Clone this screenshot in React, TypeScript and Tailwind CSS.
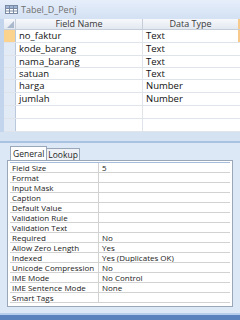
import React from 'react';

const fields = [
  { name: 'no_faktur', type: 'Text' },
  { name: 'kode_barang', type: 'Text' },
  { name: 'nama_barang', type: 'Text' },
  { name: 'satuan', type: 'Text' },
  { name: 'harga', type: 'Number' },
  { name: 'jumlah', type: 'Number' },
  { name: '', type: '' },
  { name: '', type: '' },
];

const rowHeights = ['h-[13px]', 'h-[13px]', 'h-[12px]', 'h-[12px]', 'h-[13px]', 'h-[13px]', 'h-[13px]', 'h-[13px]'];

const props = [
  ['Field Size', '5'],
  ['Format', ''],
  ['Input Mask', ''],
  ['Caption', ''],
  ['Default Value', ''],
  ['Validation Rule', ''],
  ['Validation Text', ''],
  ['Required', 'No'],
  ['Allow Zero Length', 'Yes'],
  ['Indexed', 'Yes (Duplicates OK)'],
  ['Unicode Compression', 'No'],
  ['IME Mode', 'No Control'],
  ['IME Sentence Mode', 'None'],
  ['Smart Tags', ''],
];

const TableIcon = () => (
  <svg width="13" height="9" viewBox="0 0 13 9" className="shrink-0">
    <rect x="0.5" y="0.5" width="12" height="8" fill="#ffffff" stroke="#7a8aa3" />
    <rect x="1" y="1" width="11" height="2" fill="#9fb5d6" />
    <path d="M0.5 3.5H12.5M0.5 6H12.5M4.5 0.5V8.5M8.5 0.5V8.5" stroke="#7a8aa3" strokeWidth="1" fill="none" />
  </svg>
);

export default function App() {
  return (
    <div
      className="w-[240px] h-[320px] overflow-hidden bg-[#d7e4f4] flex flex-col text-[#1e1e1e]"
      style={{ fontFamily: '"Open Sans", "DejaVu Sans", sans-serif' }}
    >
      {/* title bar */}
      <div className="h-[19px] shrink-0 flex items-center gap-[3px] pl-[5px] bg-gradient-to-b from-[#e6eefa] to-[#d3e1f3]">
        <TableIcon />
        <span className="text-[9px] text-[#6f6f6f] leading-none">Tabel_D_Penj</span>
      </div>

      {/* design grid */}
      <div className="flex shrink-0">
        <div className="w-[4px] bg-[#c3d5ec]" />
        <div className="flex-1 flex flex-col bg-white">
          <div className="h-[11px] flex border-b border-[#c5cdd8] bg-gradient-to-b from-[#f6f8fb] to-[#e3e9f1]">
            <div className="w-[12px] border-r border-[#c5cdd8] flex items-end justify-end p-[1px]">
              <svg width="7" height="7" viewBox="0 0 8 8">
                <path d="M8 0V8H0Z" fill="#a9b8cc" />
              </svg>
            </div>
            <div className="w-[127px] border-r border-[#c5cdd8] text-[9px] leading-[10px] text-center text-[#3a3a3a]">Field Name</div>
            <div className="flex-1 border-r-[2px] border-[#f7c98a] text-[9px] leading-[10px] text-center text-[#3a3a3a]">Data Type</div>
          </div>
          {fields.map((f, i) => (
            <div key={i} className={`${rowHeights[i]} flex border-b border-[#dfe3ea]`}>
              <div className={`w-[12px] border-r border-[#b9c8dc] ${i === 0 ? 'bg-[#fbd38f]' : 'bg-[#e1eaf5]'}`} />
              <div className="w-[127px] border-r border-[#dfe3ea] pl-[3px] text-[9.5px] leading-[12px] text-[#111]">{f.name}</div>
              <div className={`flex-1 pl-[3px] text-[9.5px] leading-[12px] text-[#111] ${i === 0 ? 'border-r-[2px] border-[#f7c98a]' : ''}`}>{f.type}</div>
            </div>
          ))}
        </div>
      </div>

      <div className="h-[9px] shrink-0 bg-[#d5e2f2]" />
      <div className="h-[2px] shrink-0 bg-[#a9c1e2]" />

      {/* property pane */}
      <div className="flex-1 flex flex-col bg-[#dde8f6] px-[7px]">
        <div className="flex items-end h-[17px] pl-[3px]">
          <div className="h-[14px] px-[2px] border border-b-0 border-[#9aa7b8] bg-white text-[8.5px] leading-[13px] text-[#1e1e1e]">General</div>
          <div className="h-[12px] px-[1px] border border-b-0 border-l-0 border-[#9aa7b8] bg-[#eef2f7] text-[8.5px] leading-[11px] text-[#1e1e1e]">Lookup</div>
        </div>
        <div className="border border-[#9aa7b8] bg-white pt-[1px] px-[2px] pb-[3px]">
          <div className="border-t border-[#a8bddb]">
            {props.map(([k, v]) => (
              <div key={k} className="h-[10px] flex border-b border-[#d2d2d2]">
                <div className="w-[89px] border-r border-[#d2d2d2] pl-[2px] text-[8px] leading-[10px] text-[#222] whitespace-nowrap">{k}</div>
                <div className="flex-1 pl-[3px] text-[8px] leading-[10px] text-[#222] whitespace-nowrap overflow-hidden">{v}</div>
              </div>
            ))}
          </div>
        </div>
      </div>

      {/* bottom */}
      <div className="h-[2px] shrink-0 bg-[#b6cdeb]" />
      <div className="h-[5px] shrink-0 bg-[#5a82bd]" />
    </div>
  );
}
